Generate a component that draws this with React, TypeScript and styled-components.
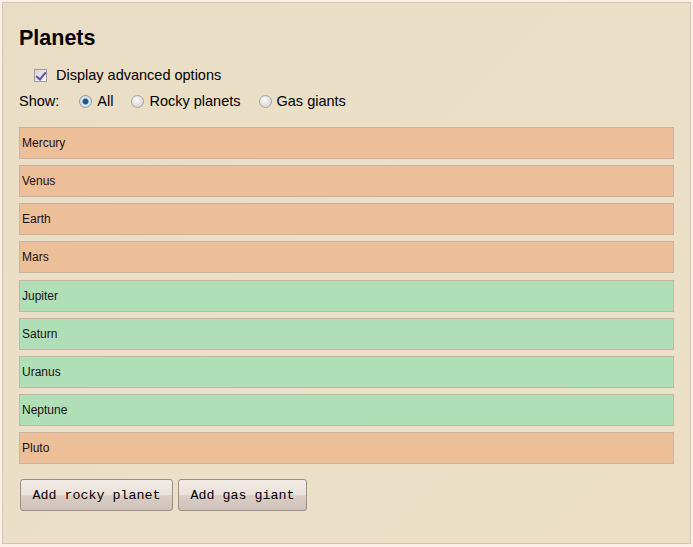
import React from "react";
import styled, { createGlobalStyle } from "styled-components";

const Global = createGlobalStyle`
  html, body { margin: 0; padding: 0; background: #fcf0e6; }
  body { font-family: "Liberation Sans", Arial, sans-serif; color: #000; }
  * { box-sizing: border-box; }
`;

const Panel = styled.div`
  margin: 2px 0 0 2px;
  width: 689px;
  height: 542px;
  border: 1px solid #d8c2b8;
  background: linear-gradient(135deg, #e9ddc6 0%, #ebdfc7 50%, #ecdfc6 100%);
  padding: 22px 16px 0 16px;
  display: flex;
  flex-direction: column;
`;

const Title = styled.h1`
  margin: 0;
  font-size: 21.5px;
  line-height: 26px;
  font-weight: bold;
`;

const OptionRow = styled.label`
  display: flex;
  align-items: center;
  margin: 15px 0 0 15px;
  font-size: 14.5px;
  line-height: 18px;
  gap: 9px;
`;

const ShowRow = styled.div`
  display: flex;
  align-items: center;
  margin-top: 8px;
  font-size: 14.5px;
  line-height: 18px;
`;

const ShowLabel = styled.span`
  margin-right: 20px;
`;

const RadioLabel = styled.label`
  display: flex;
  align-items: center;
  gap: 5px;
  margin-right: 18px;
`;

const Check = styled.input`
  appearance: none;
  margin: 0;
  width: 13px;
  height: 13px;
  border: 1px solid #a39c9c;
  background: linear-gradient(135deg, #d6d4da, #f4f3f6);
  position: relative;
  &:checked::after {
    content: "";
    position: absolute;
    left: 3px;
    top: 0px;
    width: 4px;
    height: 8px;
    border: solid #5a55a0;
    border-width: 0 2px 2px 0;
    transform: rotate(40deg);
  }
`;

const Radio = styled.input`
  appearance: none;
  margin: 0;
  width: 13px;
  height: 13px;
  border-radius: 50%;
  border: 1px solid #a8a29e;
  background: radial-gradient(circle at 40% 35%, #f8f8f8, #cfcdcb);
  &:checked {
    background: radial-gradient(circle, #1a5a90 0 2.2px, #4a8cc0 2.8px, #e2e4e8 3.6px, #cfd2d6 100%);
    border-color: #8c9aa6;
  }
`;

const List = styled.div`
  margin-top: 17px;
  display: flex;
  flex-direction: column;
  gap: 6.125px;
`;

const Planet = styled.div<{ $gas: boolean }>`
  height: 32px;
  border: 1px solid #c7b3a5;
  background: ${(p) => (p.$gas ? "#b0dfb7" : "#ecbf99")};
  font-size: 12px;
  line-height: 30px;
  padding-left: 2px;
  color: #1a1010;
`;

const Buttons = styled.div`
  display: flex;
  gap: 5px;
  margin: 15px 0 0 1px;
`;

const Button = styled.button`
  height: 32px;
  padding: 0 11.5px;
  border: 1px solid #9c8e88;
  border-radius: 3px;
  background: linear-gradient(#f2eae5 0%, #ebe1db 50%, #d9cdc5 52%, #cfc2ba 100%);
  font-family: "Liberation Mono", "Courier New", monospace;
  font-size: 13.33px;
  color: #000;
  cursor: pointer;
`;

const planets = [
  { name: "Mercury", gas: false },
  { name: "Venus", gas: false },
  { name: "Earth", gas: false },
  { name: "Mars", gas: false },
  { name: "Jupiter", gas: true },
  { name: "Saturn", gas: true },
  { name: "Uranus", gas: true },
  { name: "Neptune", gas: true },
  { name: "Pluto", gas: false },
];

export default function App() {
  return (
    <>
      <Global />
      <Panel>
        <Title>Planets</Title>
        <OptionRow>
          <Check type="checkbox" defaultChecked />
          Display advanced options
        </OptionRow>
        <ShowRow>
          <ShowLabel>Show:</ShowLabel>
          <RadioLabel>
            <Radio type="radio" name="show" defaultChecked />
            All
          </RadioLabel>
          <RadioLabel>
            <Radio type="radio" name="show" />
            Rocky planets
          </RadioLabel>
          <RadioLabel>
            <Radio type="radio" name="show" />
            Gas giants
          </RadioLabel>
        </ShowRow>
        <List>
          {planets.map((p) => (
            <Planet key={p.name} $gas={p.gas}>
              {p.name}
            </Planet>
          ))}
        </List>
        <Buttons>
          <Button>Add rocky planet</Button>
          <Button>Add gas giant</Button>
        </Buttons>
      </Panel>
    </>
  );
}
